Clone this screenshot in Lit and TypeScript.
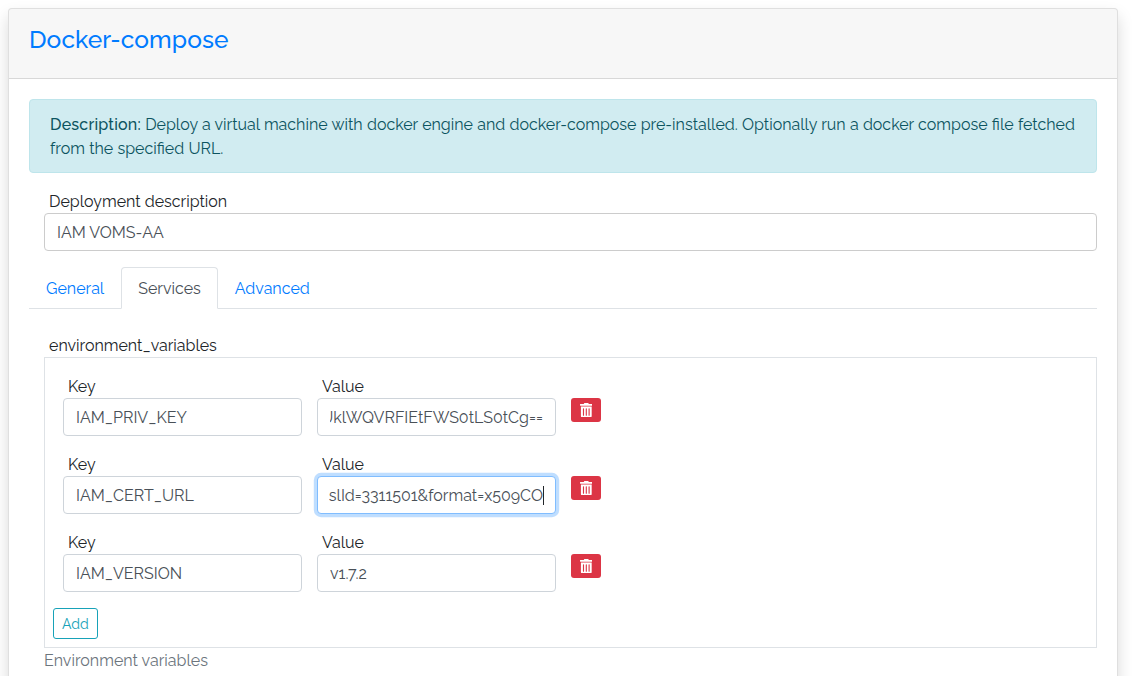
import { LitElement, html, css, nothing } from "lit";
import { customElement, property } from "lit/decorators.js";
import { classMap } from "lit/directives/class-map.js";

@customElement("text-input")
class TextInput extends LitElement {
  @property() value = "";
  @property({ type: Boolean }) focused = false;
  @property({ type: Boolean }) scrolled = false;
  @property({ type: Boolean }) dark = false;

  static styles = css`
    :host { display: block; }
    .box {
      box-sizing: border-box;
      height: 38px;
      padding: 7px 12px 5px;
      border: 1px solid #ced4da;
      border-radius: 4px;
      background: #fff;
      color: #495057;
    }
    .dark { border-color: #ccc; }
    .focused {
      border-color: #80bdff;
      box-shadow: 0 0 0 3.2px rgba(0, 123, 255, 0.25);
    }
    .view { display: flex; overflow: hidden; white-space: pre; height: 24px; }
    .scrolled .view { justify-content: flex-end; }
    .focused .view { margin: 0 -1px; }
    .text { flex: none; }
    .caret { flex: none; width: 1px; height: 19px; margin-top: 2px; background: #212529; }
  `;

  render() {
    return html`<div class=${classMap({ box: true, focused: this.focused, scrolled: this.scrolled, dark: this.dark })}>
      <div class="view"><span class="text">${this.value}</span>${this.focused ? html`<span class="caret"></span>` : nothing}</div>
    </div>`;
  }
}

@customElement("app-root")
class AppRoot extends LitElement {
  private variables = [
    { key: "IAM_PRIV_KEY", value: "UklWQVRFIEtFWS0tLS0tCg==", scrolled: true, focused: false },
    { key: "IAM_CERT_URL", value: "slId=3311501&format=x509CO", scrolled: true, focused: true },
    { key: "IAM_VERSION", value: "v1.7.2", scrolled: false, focused: false },
  ];

  static styles = css`
    :host {
      display: block;
      box-sizing: border-box;
      height: 676px;
      overflow: hidden;
      padding: 8px 14px 0 8px;
      background: #fff;
      color: #212529;
      font: 400 16px/24px Raleway, Lato, "Open Sans", sans-serif;
    }
    .card {
      box-sizing: border-box;
      height: 760px;
      border: 1px solid rgba(0, 0, 0, 0.125);
      border-radius: 4px;
      background: #fff;
      box-shadow: 0 8px 16px rgba(0, 0, 0, 0.15);
    }
    .header {
      box-sizing: border-box;
      height: 70px;
      padding: 12px 20px;
      border-bottom: 1px solid rgba(0, 0, 0, 0.125);
      border-radius: 3px 3px 0 0;
      background: rgba(0, 0, 0, 0.03);
    }
    .title {
      margin: 0;
      padding-top: 4px;
      font-size: 24.5px;
      font-weight: 500;
      line-height: 29px;
      letter-spacing: 0.08px;
      color: #007bff;
    }
    .body { padding: 20px; }
    .alert {
      padding: 13px 20px 11px;
      margin-bottom: 16px;
      border: 1px solid #bee5eb;
      border-radius: 4px;
      background: #d1ecf1;
      color: #0c5460;
      word-spacing: 0.2px;
    }
    .alert strong { font-weight: 500; letter-spacing: 0.2px; }
    .field { padding-left: 15px; }
    .label { box-sizing: border-box; height: 24px; padding: 1px 0 0 5px; }
    .tabs { display: flex; margin-top: 16px; border-bottom: 1px solid #dee2e6; }
    .tab {
      padding: 9px 16px 7px;
      margin-bottom: -1px;
      border: 1px solid transparent;
      border-radius: 4px 4px 0 0;
      color: #007bff;
    }
    .active { color: #495057; border-color: #dee2e6 #dee2e6 #fff; background: #fff; }
    .variables { margin-top: 24px; }
    .list { padding: 16px 8px 8px; border: 1px solid #dee2e6; }
    .row { display: grid; grid-template-columns: 239px 239px 30px; column-gap: 15px; padding-left: 10px; margin-bottom: 16px; }
    .remove {
      display: flex;
      align-items: center;
      justify-content: center;
      height: 24px;
      margin-top: 24px;
      border-radius: 3px;
      background: #dc3545;
    }
    .remove svg { display: block; width: 12.6px; height: 14.4px; fill: #fff; }
    .add {
      display: inline-block;
      vertical-align: top;
      padding: 5px 8px 3px;
      border: 1px solid #17a2b8;
      border-radius: 3px;
      color: #17a2b8;
      font-size: 14px;
      line-height: 21px;
    }
    .help { padding-top: 1px; color: #6c757d; letter-spacing: 0.02px; }
  `;

  private trash() {
    return html`<svg viewBox="0 0 448 512"><path d="M32 464a48 48 0 0 0 48 48h288a48 48 0 0 0 48-48V128H32zm272-256a16 16 0 0 1 40 0v224a16 16 0 0 1-40 0zm-100 0a16 16 0 0 1 40 0v224a16 16 0 0 1-40 0zm-100 0a16 16 0 0 1 40 0v224a16 16 0 0 1-40 0zM432 32H312l-9.4-18.7A24 24 0 0 0 281.1 0H166.8a23.72 23.72 0 0 0-21.4 13.3L136 32H16A16 16 0 0 0 0 48v32a16 16 0 0 0 16 16h416a16 16 0 0 0 16-16V48a16 16 0 0 0-16-16z"/></svg>`;
  }

  render() {
    return html`
      <div class="card">
        <div class="header"><h4 class="title">Docker-compose</h4></div>
        <div class="body">
          <div class="alert"><strong>Description:</strong> Deploy a virtual machine with docker engine and docker-compose pre-installed. Optionally run a docker compose file fetched from the specified URL.</div>
          <div class="field">
            <div class="label">Deployment description</div>
            <text-input dark value="IAM VOMS-AA"></text-input>
          </div>
          <div class="tabs">
            ${["General", "Services", "Advanced"].map((t) => html`<div class=${classMap({ tab: true, active: t === "Services" })}>${t}</div>`)}
          </div>
          <div class="field variables">
            <div class="label">environment_variables</div>
            <div class="list">
              ${this.variables.map((v) => html`
                <div class="row">
                  <div><div class="label">Key</div><text-input .value=${v.key}></text-input></div>
                  <div><div class="label">Value</div><text-input .value=${v.value} .scrolled=${v.scrolled} .focused=${v.focused}></text-input></div>
                  <div class="remove">${this.trash()}</div>
                </div>`)}
              <div class="add">Add</div>
            </div>
            <div class="help">Environment variables</div>
          </div>
        </div>
      </div>`;
  }
}
